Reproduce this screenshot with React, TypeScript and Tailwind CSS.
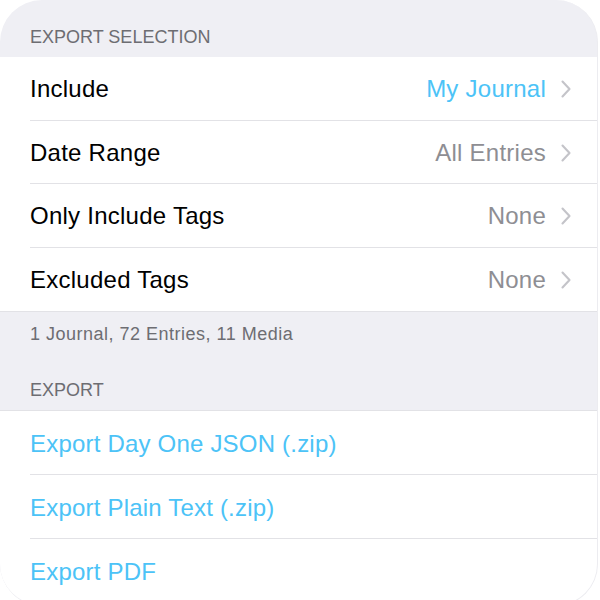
const selectionRows = [
  { label: "Include", value: "My Journal", accent: true },
  { label: "Date Range", value: "All Entries" },
  { label: "Only Include Tags", value: "None" },
  { label: "Excluded Tags", value: "None" },
];

const exportRows = ["Export Day One JSON (.zip)", "Export Plain Text (.zip)", "Export PDF"];

const Chevron = () => (
  <svg width="10" height="18" viewBox="0 0 10 18" className="ml-[15px] shrink-0" aria-hidden="true">
    <path d="M1.5 1.5 L8.5 9 L1.5 16.5" fill="none" stroke="#c4c4c9" strokeWidth="2.1" strokeLinecap="round" strokeLinejoin="round" />
  </svg>
);

const App = () => {
  return (
    <div className="h-[600px] w-[600px] overflow-hidden bg-white font-['Liberation_Sans',Arial,sans-serif]">
      <div className="h-[606px] w-[598px] overflow-hidden rounded-[42px] border-r border-b border-[#ececf0] bg-[#efeff4]">
        {/* Export selection */}
        <div className="flex h-[57px] items-end px-[30px] pb-[6px] text-[18px] uppercase text-[#6d6d72]">
          Export Selection
        </div>
        <div className="bg-white">
          {selectionRows.map((row, i) => (
            <div key={row.label} className="pl-[30px]">
              <div
                className={`flex h-[63.5px] items-center pr-[26px] pt-[2px] text-[24px] tracking-[0.25px] ${
                  i < selectionRows.length - 1 ? "border-b border-[#e2e2e6]" : ""
                }`}
              >
                <span className="flex-1 text-black">{row.label}</span>
                <span className={row.accent ? "text-[#4cc3f7]" : "text-[#8e8e93]"}>{row.value}</span>
                <Chevron />
              </div>
            </div>
          ))}
        </div>
        <div className="flex h-[44px] items-center border-t border-[#e2e2e6] px-[30px] pt-[2px] text-[18px] tracking-[0.5px] text-[#6d6d72]">
          1 Journal, 72 Entries, 11 Media
        </div>

        {/* Export */}
        <div className="flex h-[55px] items-end px-[30px] pb-[6px] text-[18px] uppercase text-[#6d6d72]">
          Export
        </div>
        <div className="border-t border-[#e2e2e6] bg-white">
          {exportRows.map((label, i) => (
            <div key={label} className="pl-[30px]">
              <div
                className={`flex h-[64px] items-center pt-[2px] text-[24px] tracking-[0.2px] text-[#4cc3f7] ${
                  i < exportRows.length - 1 ? "border-b border-[#e2e2e6]" : ""
                }`}
              >
                {label}
              </div>
            </div>
          ))}
        </div>
      </div>
    </div>
  );
};

export default App;
